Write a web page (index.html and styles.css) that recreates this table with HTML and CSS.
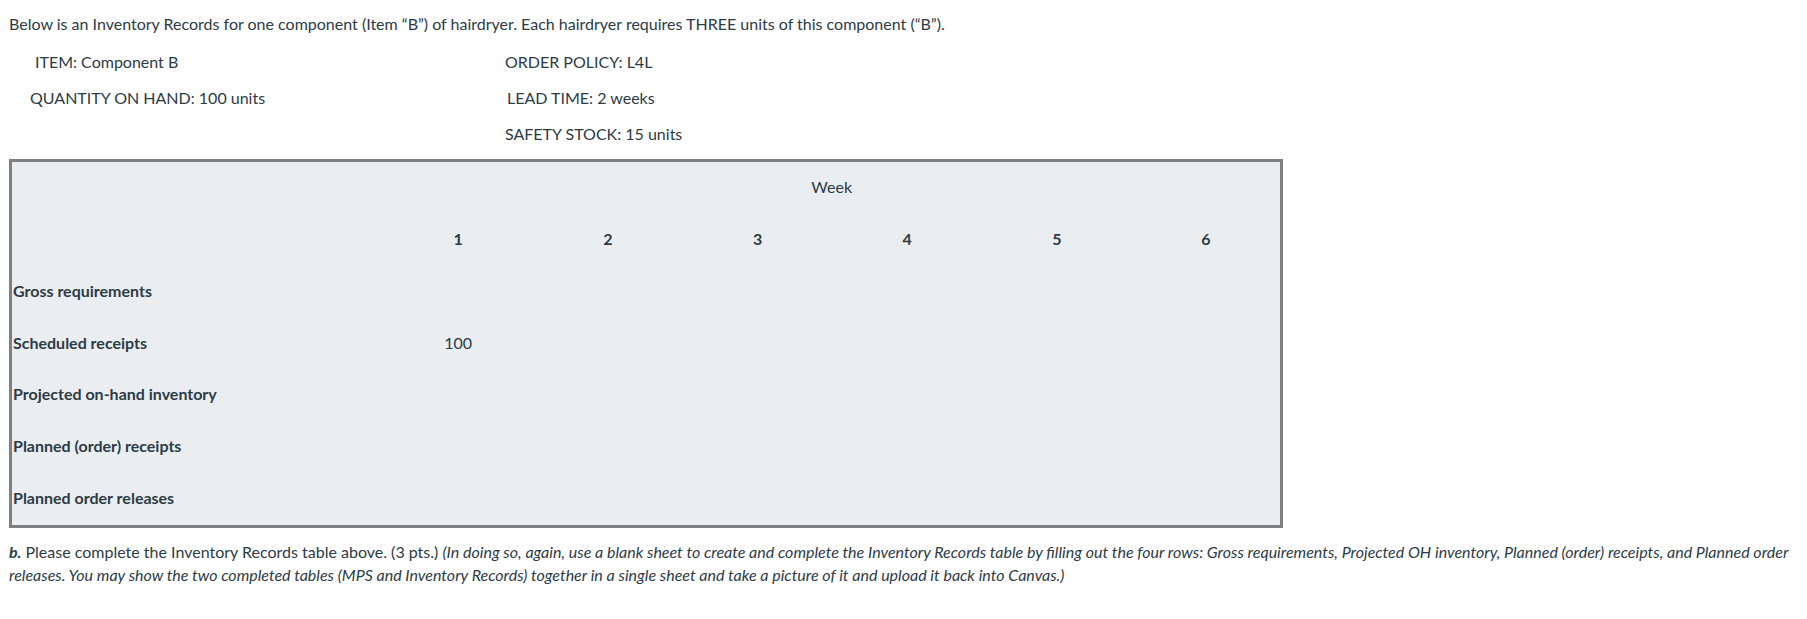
FILE: index.html
```html
<!DOCTYPE html>
<html lang="en">
<head>
<meta charset="utf-8">
<title>Inventory Records</title>
<link rel="stylesheet" href="styles.css">
</head>
<body>
<div class="page">
  <p class="intro">Below is an Inventory Records for one component (Item “B”) of hairdryer. Each hairdryer requires THREE units of this component (“B”).</p>
  <div class="info">
    <div class="info-left indent-a">ITEM: Component B</div>
    <div class="info-right">ORDER POLICY: L4L</div>
    <div class="info-left indent-b">QUANTITY ON HAND: 100 units</div>
    <div class="info-right shift">LEAD TIME: 2 weeks</div>
    <div class="info-left"></div>
    <div class="info-right">SAFETY STOCK: 15 units</div>
  </div>
  <table class="records">
    <colgroup>
      <col class="col-label">
      <col class="col-week"><col class="col-week"><col class="col-week">
      <col class="col-week"><col class="col-week"><col class="col-week">
    </colgroup>
    <tr>
      <td></td>
      <td class="week" colspan="6">Week</td>
    </tr>
    <tr>
      <td></td>
      <td class="num">1</td><td class="num">2</td><td class="num">3</td>
      <td class="num">4</td><td class="num">5</td><td class="num">6</td>
    </tr>
    <tr>
      <td class="label">Gross requirements</td>
      <td></td><td></td><td></td><td></td><td></td><td></td>
    </tr>
    <tr>
      <td class="label">Scheduled receipts</td>
      <td class="val">100</td><td></td><td></td><td></td><td></td><td></td>
    </tr>
    <tr>
      <td class="label">Projected on-hand inventory</td>
      <td></td><td></td><td></td><td></td><td></td><td></td>
    </tr>
    <tr>
      <td class="label">Planned (order) receipts</td>
      <td></td><td></td><td></td><td></td><td></td><td></td>
    </tr>
    <tr>
      <td class="label">Planned order releases</td>
      <td></td><td></td><td></td><td></td><td></td><td></td>
    </tr>
  </table>
  <p class="task"><strong><em>b.</em></strong> Please complete the Inventory Records table above. (3 pts.) <em>(In doing so, again, use a blank sheet to create and complete the Inventory Records table by filling out the four rows: Gross requirements, Projected OH inventory, Planned (order) receipts, and Planned order releases. You may show the two completed tables (MPS and Inventory Records) together in a single sheet and take a picture of it and upload it back into Canvas.)</em></p>
</div>
</body>
</html>
```
FILE: styles.css
```css
html, body {
  margin: 0;
  padding: 0;
  background: #ffffff;
}

body {
  font-family: Lato, "Open Sans", "Liberation Sans", sans-serif;
  font-size: 16px;
  line-height: 24px;
  color: #2d3b45;
}

.page {
  padding: 12px 9px 0 9px;
}

.intro {
  margin: 0;
}

.info {
  display: grid;
  grid-template-columns: 496px 1fr;
  grid-auto-rows: 36px;
  margin-top: 14px;
}

.info-left,
.info-right {
  line-height: 24px;
}

.indent-a {
  padding-left: 26px;
}

.indent-b {
  padding-left: 21px;
}

.shift {
  padding-left: 2px;
}

.records {
  margin-top: 1px;
  width: 1274px;
  border: 3px solid #808080;
  border-collapse: collapse;
  background: #eaeef0;
  table-layout: fixed;
}

.col-label {
  width: 372px;
}

.col-week {
  width: 149.33px;
}

.records td {
  height: 49.86px;
  padding: 0 0 2px 0;
  vertical-align: middle;
}

.records .label {
  padding-left: 1px;
  font-weight: 700;
}

.records .week,
.records .num,
.records .val {
  text-align: center;
}

.records .num {
  font-weight: 700;
}

.task {
  margin: 12px 0 0 0;
  line-height: 23px;
}
```
